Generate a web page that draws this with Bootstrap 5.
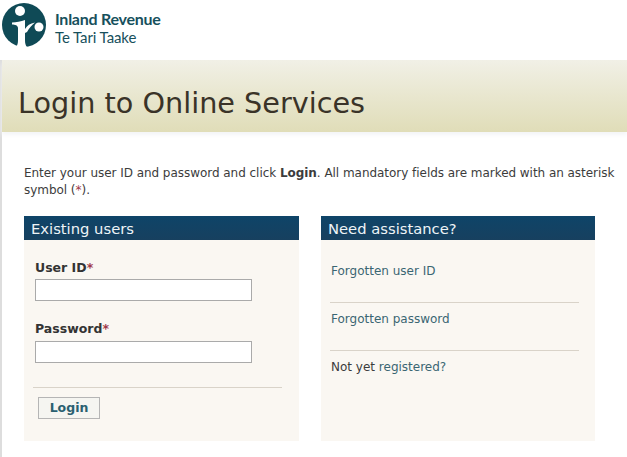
<!DOCTYPE html>
<html lang="en">
<head>
  <meta charset="UTF-8" />
  <meta name="viewport" content="width=device-width, initial-scale=1" />
  <title>Login to Online Services</title>
  <link href="https://cdn.jsdelivr.net/npm/bootstrap@5.3.3/dist/css/bootstrap.min.css" rel="stylesheet" />
  <style>
    body {
      font-family: "DejaVu Sans", Verdana, sans-serif;
      font-size: 12px;
      color: #3c3c3c;
      background: #fff;
      width: 627px;
      height: 457px;
      overflow: hidden;
    }
    .site-top { height: 60px; padding: 2px 0 0 1px; }
    .logo-words { font-family: Lato, sans-serif; color: #17505c; line-height: 18px; margin-left: 8px; margin-top: 8px; }
    .logo-words b { display: block; font-size: 16px; font-weight: 700; letter-spacing: -0.25px; }
    .logo-words span { display: block; font-size: 15px; letter-spacing: -0.1px; }
    .page-wrap { border-left: 2px solid #ddd; height: 397px; }
    .title-band {
      height: 72px;
      padding: 25px 0 0 16px;
      background: linear-gradient(to bottom, #f1f0e6, #e0ddb8);
      box-shadow: 0 3px 4px #f4f5f7;
    }
    .title-band h1 { font-family: "DejaVu Sans", Verdana, sans-serif; font-size: 28.7px; font-weight: 400; line-height: 36px; color: #3a3328; margin: 0; }
    .intro { padding: 33px 0 0 22px; line-height: 17px; letter-spacing: -0.04px; height: 84px; }
    .intro p { margin: 0; width: 595px; }
    .req { color: #a03a4a; }
    .boxes { padding-left: 22px; gap: 22px; }
    .panel-box { height: 225px; background: #faf7f2; }
    .panel-left { width: 275px; }
    .panel-right { width: 274px; }
    .panel-head { background: linear-gradient(to bottom, #0e4468, #17405f); color: #eef4f7; font-size: 14.75px; line-height: 25px; height: 24px; padding-left: 7px; }
    .field-label { display: block; font-weight: 700; font-size: 12.5px; line-height: 16px; color: #333; margin: 0 0 4px; }
    .first-label { margin-bottom: 3px; }
    .field-input { display: block; width: 217px; height: 22px; background: #fff; border: 1px solid #aaa; padding: 0 3px; border-radius: 0; }
    .form-area { padding: 20px 0 0 11px; }
    .form-area .field-block + .field-block { margin-top: 20px; }
    .rule-line { border-top: 1px solid #d9d3c9; }
    .login-rule { width: 249px; margin: 24px 0 9px -2px; }
    .login-btn { background: #f5f5f1; border: 1px solid #b5b5b5; border-radius: 0; color: #2a6070; font-weight: 700; font-size: 12.5px; line-height: 16px; padding: 2px 0; width: 62px; height: 22px; margin-left: 3px; }
    .help-link { color: #3a6672; text-decoration: none; }
    .help-row { padding-left: 10px; line-height: 16px; height: 16px; }
    .help-list { padding-top: 23px; }
    .help-rule { width: 249px; margin: 23px 0 8px 9px; }
  </style>
</head>
<body>
  <div class="site-top d-flex">
    <svg width="46" height="46" viewBox="0 0 46 46">
      <circle cx="23" cy="23" r="22" fill="#0f4a56" />
      <circle cx="19" cy="9" r="5" fill="#fff" />
      <path d="M11 20.500 C15 20.500 20 19.500 24 18 L24 38 C24 41 24.500 43.500 26 45 L15 45 C16.500 43.500 17 41 17 38 L17 26 C17 23.500 14 22.500 11 22.500 Z" fill="#fff" />
      <path d="M24 27 C26 23.500 29 21.500 34 20.500 C31 23 28 26 26 30 L24 31 Z" fill="#fff" />
      <circle cx="38" cy="25" r="4.500" fill="#fff" />
    </svg>
    <div class="logo-words"><b>Inland Revenue</b><span>Te Tari Taake</span></div>
  </div>

  <div class="page-wrap">
    <div class="title-band"><h1>Login to Online Services</h1></div>

    <div class="intro">
      <p>Enter your user ID and password and click <strong>Login</strong>. All mandatory fields are marked with an asterisk symbol (<span class="req">*</span>).</p>
    </div>

    <div class="boxes d-flex">
      <div class="panel-box panel-left">
        <div class="panel-head">Existing users</div>
        <form class="form-area">
          <div class="field-block">
            <label class="field-label first-label" for="userId">User ID<span class="req">*</span></label>
            <input class="field-input" id="userId" type="text" />
          </div>
          <div class="field-block">
            <label class="field-label" for="password">Password<span class="req">*</span></label>
            <input class="field-input" id="password" type="password" />
          </div>
          <div class="rule-line login-rule"></div>
          <button type="button" class="login-btn">Login</button>
        </form>
      </div>
      <div class="panel-box panel-right">
        <div class="panel-head">Need assistance?</div>
        <div class="help-list">
          <div class="help-row"><a class="help-link" href="#">Forgotten user ID</a></div>
          <div class="rule-line help-rule"></div>
          <div class="help-row"><a class="help-link" href="#">Forgotten password</a></div>
          <div class="rule-line help-rule"></div>
          <div class="help-row">Not yet <a class="help-link" href="#">registered?</a></div>
        </div>
      </div>
    </div>
  </div>
</body>
</html>
